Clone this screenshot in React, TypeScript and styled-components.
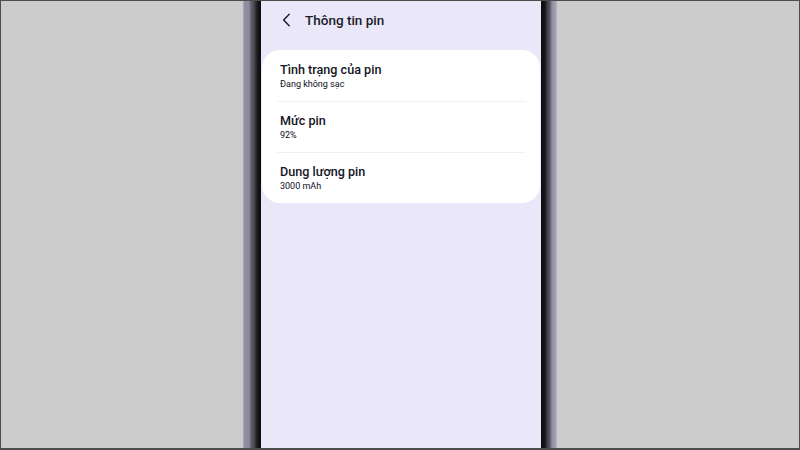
import styled, { createGlobalStyle } from 'styled-components'

const GlobalStyle = createGlobalStyle`
  html, body {
    margin: 0;
    padding: 0;
  }
  body {
    width: 800px;
    height: 450px;
    overflow: hidden;
    font-family: Roboto, 'Noto Sans', sans-serif;
  }
`

const rows = [
  { title: 'Tình trạng của pin', value: 'Đang không sạc' },
  { title: 'Mức pin', value: '92%' },
  { title: 'Dung lượng pin', value: '3000 mAh' },
]

export default function App() {
  return (
    <>
      <GlobalStyle />
      <Page>
        <Phone>
          <LeftBezel />
          <Screen>
            <Header>
              <BackButton aria-label="Quay lại">
                <svg width="9" height="14" viewBox="0 0 9 14" fill="none">
                  <path
                    d="M7.2 1.2L1.6 7l5.6 5.8"
                    stroke="#1c1b2b"
                    strokeWidth="1.4"
                    strokeLinecap="round"
                    strokeLinejoin="round"
                  />
                </svg>
              </BackButton>
              <Title>Thông tin pin</Title>
            </Header>
            <Card>
              {rows.map((row, index) => (
                <Row key={`row-${index}`} first={index === 0}>
                  <RowTitle>{row.title}</RowTitle>
                  <RowValue>{row.value}</RowValue>
                </Row>
              ))}
            </Card>
          </Screen>
          <RightBezel />
        </Phone>
      </Page>
    </>
  )
}

const Page = styled.div`
  box-sizing: border-box;
  width: 800px;
  height: 450px;
  background: #cccccc;
  border: 1px solid #4d4d4d;
  border-bottom-width: 2px;
  display: flex;
  justify-content: center;
`

const Phone = styled.div`
  display: flex;
  height: 100%;
`

const LeftBezel = styled.div`
  width: 18px;
  background: linear-gradient(
    to right,
    #a9a9b4 0px,
    #8d8ca2 2px,
    #8b8aa0 6px,
    #62616f 8px,
    #4a4a52 11px,
    #2c2c31 13px,
    #151518 15px,
    #0d0d10 18px
  );
`

const RightBezel = styled.div`
  width: 16px;
  background: linear-gradient(
    to right,
    #0e0e12 0px,
    #15151a 4px,
    #3c3c42 6px,
    #5a5a63 9px,
    #8f8ea6 11px,
    #9e9db2 14px,
    #b8b8c0 16px
  );
`

const Screen = styled.div`
  width: 280px;
  background: #e9e7f8;
  display: flex;
  flex-direction: column;
`

const Header = styled.div`
  height: 49px;
  box-sizing: border-box;
  padding: 0 0 12px 21px;
  display: flex;
  align-items: center;
  gap: 14px;
`

const BackButton = styled.button`
  border: none;
  background: none;
  padding: 0;
  width: 9px;
  height: 14px;
  display: flex;
  align-items: center;
`

const Title = styled.h1`
  margin: 0;
  font-size: 13.5px;
  font-weight: 500;
  color: #1c1b2b;
`

const Card = styled.div`
  margin: 0 1px;
  background: #ffffff;
  border-radius: 18px;
  display: flex;
  flex-direction: column;
`

const Row = styled.div<{ first?: boolean }>`
  margin: 0 14px 0 15px;
  padding: ${({ first }) => (first ? '12px 3px 11px' : '11px 3px 11px')};
  border-top: ${({ first }) => (first ? 'none' : '1px solid #f1f0f6')};
  display: flex;
  flex-direction: column;
`

const RowTitle = styled.div`
  font-size: 12.6px;
  line-height: 16px;
  font-weight: 500;
  color: #161524;
`

const RowValue = styled.div`
  font-size: 9px;
  line-height: 12px;
  font-weight: 400;
  color: #0f0e1c;
`
